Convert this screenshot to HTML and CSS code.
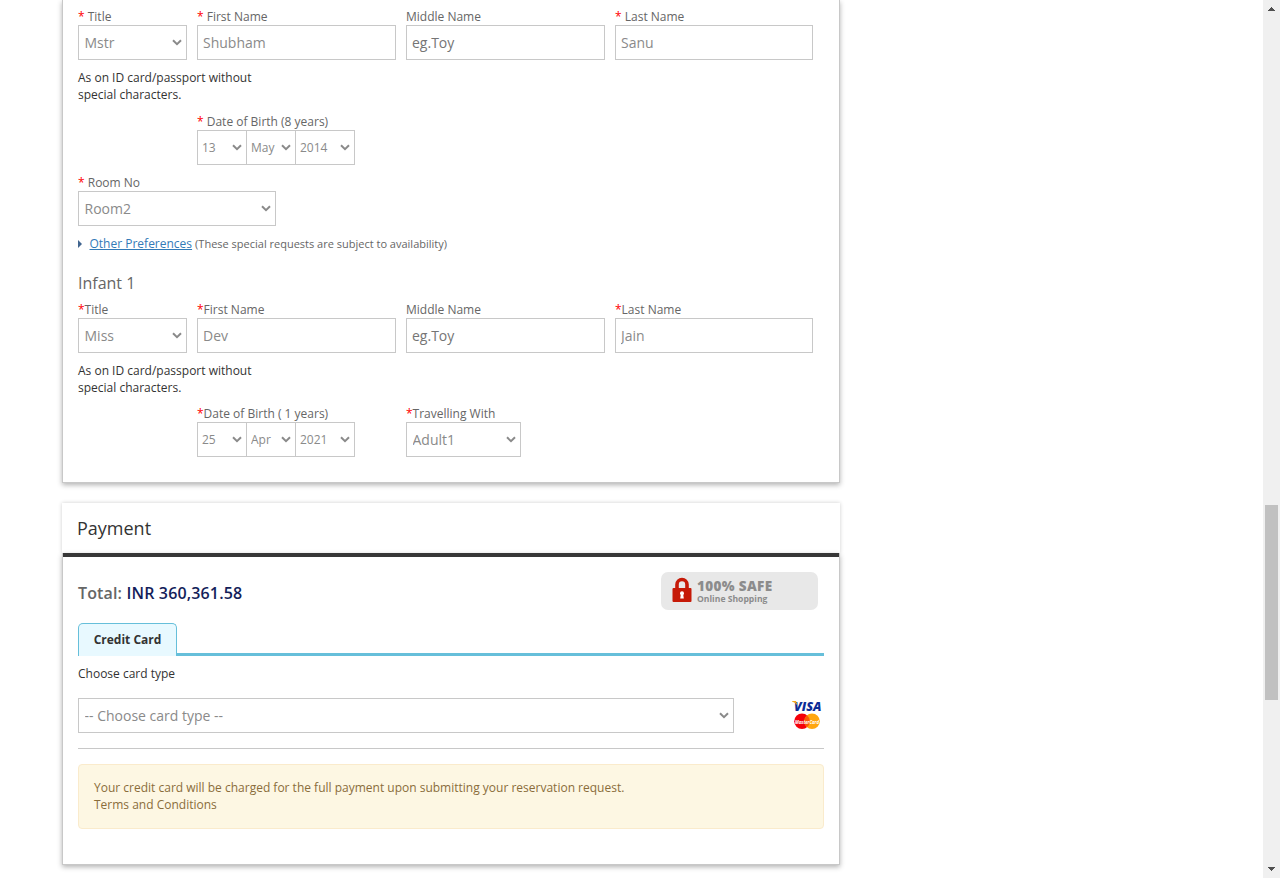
FILE: index.html
```html
<!DOCTYPE html>
<html lang="en">
<head>
<meta charset="utf-8">
<title>Guest details and payment</title>
<link rel="stylesheet" href="styles.css">
</head>
<body>
<div class="page">
<main class="content">
  <section class="card guests">
    <div class="row">
      <label class="field title"><span class="label"><b>*</b> Title</span><select><option>Mstr</option></select></label>
      <label class="field name"><span class="label"><b>*</b> First Name</span><input type="text" value="Shubham"></label>
      <label class="field name"><span class="label">Middle Name</span><input type="text" placeholder="eg.Toy"></label>
      <label class="field last"><span class="label"><b>*</b> Last Name</span><input type="text" value="Sanu"></label>
    </div>
    <p class="note">As on ID card/passport without special characters.</p>
    <div class="row indent birth">
      <div class="field dob"><span class="label"><b>*</b> Date of Birth (8 years)</span>
        <div class="date"><select class="day"><option>13</option></select><select class="month"><option>May</option></select><select class="year"><option>2014</option></select></div>
      </div>
    </div>
    <label class="field room"><span class="label"><b>*</b> Room No</span><select><option>Room2</option></select></label>
    <p class="prefs"><svg class="caret" viewBox="0 0 4 8"><path d="M0 0L4 4L0 8Z"/></svg><a href="#">Other Preferences</a><small>(These special requests are subject to availability)</small></p>
    <h3>Infant 1</h3>
    <div class="row">
      <label class="field title"><span class="label"><b>*</b>Title</span><select><option>Miss</option></select></label>
      <label class="field name"><span class="label"><b>*</b>First Name</span><input type="text" value="Dev"></label>
      <label class="field name"><span class="label">Middle Name</span><input type="text" placeholder="eg.Toy"></label>
      <label class="field last"><span class="label"><b>*</b>Last Name</span><input type="text" value="Jain"></label>
    </div>
    <p class="note">As on ID card/passport without special characters.</p>
    <div class="row indent">
      <div class="field dob"><span class="label"><b>*</b>Date of Birth ( 1 years)</span>
        <div class="date"><select class="day"><option>25</option></select><select class="month"><option>Apr</option></select><select class="year"><option>2021</option></select></div>
      </div>
      <label class="field adult"><span class="label"><b>*</b>Travelling With</span><select><option>Adult1</option></select></label>
    </div>
  </section>

  <section class="payment">
    <h2>Payment</h2>
    <div class="card pay-body">
      <div class="summary">
        <p class="total">Total: <strong>INR 360,361.58</strong></p>
        <div class="safe">
          <svg class="lock" viewBox="0 0 20 26"><path d="M5 11V7.500a5 5 0 0 1 10 0V11" fill="none" stroke="#c61a08" stroke-width="3.600"/><rect x=".5" y="11" width="19" height="14" rx="1" fill="#c61a08"/><circle cx="10" cy="16.200" r="2" fill="#fff"/><path d="M9 16h2l.8 5.500H8.200z" fill="#fff"/></svg>
          <div class="safe-text"><span class="safe-title">100% SAFE</span><span class="safe-sub">Online Shopping</span></div>
        </div>
      </div>
      <div class="tabs"><span class="tab">Credit Card</span></div>
      <p class="choose">Choose card type</p>
      <div class="card-type">
        <select><option>-- Choose card type --</option></select>
        <svg class="brands" viewBox="0 0 30 32">
          <text x="2" y="13" class="visa" textLength="27.5" lengthAdjust="spacingAndGlyphs">VISA</text>
          <path d="M0 3h4l1.500 4.500Q3.500 4.500 0 3.500z" fill="#f5a81c"/>
          <circle cx="10" cy="23.300" r="7.800" fill="#f5000a"/><circle cx="20" cy="23.300" r="7.800" fill="#ffa60f"/>
          <path d="M15 17.300a7.800 7.800 0 0 1 0 12a7.800 7.800 0 0 1 0-12" fill="#f85a08"/>
          <text x="3" y="25.500" class="mc" textLength="24" lengthAdjust="spacingAndGlyphs">MasterCard</text>
        </svg>
      </div>
      <p class="alert">Your credit card will be charged for the full payment upon submitting your reservation request.<br>Terms and Conditions</p>
    </div>
  </section>
</main>
<div class="scrollbar">
  <svg viewBox="0 0 7 4"><path d="M3 0h1v1h1v1h1v1h1v1H0V3h1V2h1V1h1z"/></svg>
  <div class="thumb"></div>
  <svg viewBox="0 0 7 4"><path d="M0 0h7v1H6v1H5v1H4v1H3V3H2V2H1V1H0z"/></svg>
</div>
</div>
</body>
</html>
```
FILE: styles.css
```css
* { box-sizing: border-box; }
body { margin: 0; background: #fff; color: #333; font: 12px/17px "Open Sans", sans-serif; overflow: hidden; }
p, h2, h3 { margin: 0; }
.page { display: flex; height: 878px; }
.content { flex: 1; padding-left: 62px; }
.card { width: 778px; background: #fff; border: 1px solid #c8c8c8; border-top: 0; box-shadow: 0 2px 5px rgba(0, 0, 0, .3); }
.guests { height: 483px; padding: 8px 15px 0; }
.row { display: flex; gap: 10px; }
.indent { padding-left: 119px; }
.field { display: block; }
.label { display: block; height: 17px; color: #666; }
.label b { color: #f00; font-weight: 400; }
select, input { display: block; width: 100%; height: 35px; margin: 0; border: 1px solid #c8c8c8; border-radius: 0; background: #fff; color: #8a8a8a; font: 14px "Open Sans", sans-serif; outline: 0; }
select { appearance: none; padding: 0 5.5px; background: #fff url("data:image/svg+xml,%3Csvg xmlns='http://www.w3.org/2000/svg' width='10' height='7' viewBox='0 0 10 7'%3E%3Cpath d='M1 1.300L5 5.200L9 1.300' fill='none' stroke='%238a8a8a' stroke-width='2'/%3E%3C/svg%3E") no-repeat right 4px top 13px; }
input { padding: 0 5px; }
.title { width: 109px; }
.name { width: 199px; }
.last { width: 198px; }
.note { width: 190px; margin: 9px 0; }
.birth { padding-top: 1px; margin-bottom: 9px; }
.dob { width: 199px; }
.date { display: flex; }
.date select { font-size: 12px; padding: 0 0 0 4px; }
.date .day { width: 50px; }
.date .month { width: 50px; margin-left: -1px; }
.date .year { width: 60px; margin-left: -1px; }
.room { width: 198px; }
.adult { width: 115px; }
.prefs { display: flex; align-items: center; margin-top: 9px; color: #666; }
.caret { width: 4px; height: 8px; margin-right: 7.5px; fill: #41658f; }
.prefs a { color: #337ab7; text-decoration: underline; }
.prefs small { margin-left: 3px; font-size: 11px; }
h3 { height: 22px; margin: 20px 0 7px; color: #666; font: 400 16px/22px "Open Sans", sans-serif; }
.payment { width: 778px; margin-top: 20px; }
h2 { height: 50px; padding-left: 15px; color: #333; font: 400 18px/50px "Open Sans", sans-serif; box-shadow: 0 0 4px rgba(0, 0, 0, .2); }
.pay-body { position: relative; height: 312px; padding: 0 15px; }
.pay-body::before { content: ""; display: block; height: 4px; margin: 0 -15px; background: #373737; }
.summary { display: flex; align-items: flex-start; justify-content: space-between; height: 66px; padding: 15px 6px 0 0; }
.total { margin-top: 10px; color: #666; font: 600 16px/22px "Open Sans", sans-serif; letter-spacing: .15px; }
.total strong { color: #141e5a; font-weight: 600; }
.safe { display: flex; width: 157px; height: 38px; padding: 5px 0 0 11px; border-radius: 7px; background: #e8e8e8; }
.lock { width: 20px; height: 26px; }
.safe-text { display: flex; flex-direction: column; margin-left: 5px; color: #8c8c8c; white-space: nowrap; }
.safe-title { font: 800 13.5px/18px "Open Sans", sans-serif; letter-spacing: .35px; }
.safe-sub { font: 700 8.6px/9px "Open Sans", sans-serif; }
.tabs { display: flex; height: 33px; box-shadow: inset 0 -3px #66bfda; }
.tab { width: 99px; border: 1px solid #66bfda; border-bottom: 0; border-radius: 5px 5px 0 0; background: #e8f9ff; text-align: center; line-height: 32px; font-weight: 700; }
.choose { margin-top: 9px; }
.card-type { display: flex; justify-content: space-between; height: 67px; padding-top: 16px; border-bottom: 1px solid #c8c8c8; }
.card-type select { width: 656px; }
.brands { width: 30px; height: 32px; margin-right: 2px; }
.visa { fill: #0c2c96; font: italic 800 13px "Open Sans", sans-serif; }
.mc { fill: #fff; font: italic 700 5px "Open Sans", sans-serif; }
.alert { height: 65px; margin-top: 15px; padding: 14px 15px; border: 1px solid #faebcc; border-radius: 4px; background: #fdf7e3; color: #8a6d3b; }
.scrollbar { display: flex; flex-direction: column; align-items: center; width: 17px; padding: 7px 0; background: #f0f0f0; }
.scrollbar svg { width: 7px; height: 4px; fill: #505050; }
.thumb { width: 13px; height: 195px; margin: 494px 0 167px; background: #c1c1c1; flex: none; }
```
